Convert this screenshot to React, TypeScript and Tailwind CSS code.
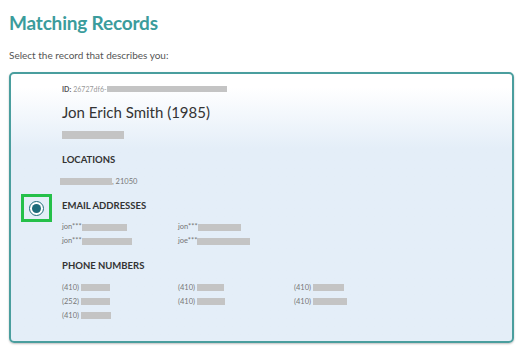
import React from 'react';

const Bar = ({ w, h = 'h-[8px]' }: { w: string; h?: string }) => (
  <span className={`inline-block ${w} ${h} bg-[#c4c4c4] align-middle`} />
);

const Heading = ({ children }: { children: React.ReactNode }) => (
  <h3 className="text-[9.5px] font-bold text-[#333] leading-none">{children}</h3>
);

const emails = [
  { prefix: 'jon***', w: 'w-[45px]' },
  { prefix: 'jon***', w: 'w-[43px]' },
  { prefix: 'jon***', w: 'w-[50px]' },
  { prefix: 'joe***', w: 'w-[53px]' },
];

const phones = [
  { area: '(410)', w: 'w-[29px]' },
  { area: '(410)', w: 'w-[27px]' },
  { area: '(410)', w: 'w-[31px]' },
  { area: '(252)', w: 'w-[29px]' },
  { area: '(410)', w: 'w-[28px]' },
  { area: '(410)', w: 'w-[34px]' },
  { area: '(410)', w: 'w-[30px]' },
];

export default function App() {
  return (
    <div className="w-[523px] h-[353px] bg-white pl-[9px] pr-[9px] pt-[10px] font-['Lato','Noto_Sans',sans-serif] overflow-hidden">
      <h1 className="text-[19px] font-bold text-[#3b9c9c] leading-[26px] tracking-[-0.01em]">Matching Records</h1>
      <p className="mt-[12px] text-[10px] text-[#555] leading-[14px]">Select the record that describes you:</p>

      <div className="mt-[10px] h-[271px] rounded-[5px] border-2 border-[#4a9e9e] bg-gradient-to-b from-white from-[5%] to-[#e4eef8] to-[28%] shadow-[0_1px_2px_rgba(0,0,0,0.25)] flex">
        {/* radio column */}
        <div className="w-[51px] shrink-0 flex flex-col">
          <div className="mt-[120px] ml-[10px] w-[31px] h-[28px] border-[3px] border-[#25c04a] flex items-center justify-center">
            <span className="w-[15px] h-[15px] rounded-full border-[1.5px] border-[#1e6b7a] bg-white flex items-center justify-center">
              <span className="w-[9px] h-[9px] rounded-full bg-[#1e6b7a]" />
            </span>
          </div>
        </div>

        <div className="flex-1 pt-[10px] text-[#777]">
          <div className="flex items-center text-[7px] leading-[10px]">
            <span className="font-bold text-[#555]">ID:</span>
            <span className="ml-[2px] text-[#999]">26727df6-</span>
            <Bar w="w-[120px]" h="h-[6px]" />
          </div>
          <div className="mt-[8px] text-[15px] text-[#333] leading-[20px]">Jon Erich Smith (1985)</div>
          <div className="mt-[3px] leading-none">
            <Bar w="w-[62px]" />
          </div>

          <div className="mt-[14px]">
            <Heading>LOCATIONS</Heading>
            <div className="mt-[12px] flex items-center text-[7.5px] leading-[10px] ml-[-2px]">
              <Bar w="w-[52px]" h="h-[7px]" />
              <span>, 21050</span>
            </div>
          </div>

          <div className="mt-[14px]">
            <Heading>EMAIL ADDRESSES</Heading>
            <div className="mt-[12px] grid grid-cols-[116px_116px] gap-y-[4px] text-[7.5px] leading-[10px]">
              {emails.map((e, i) => (
                <div key={i} className="flex items-center">
                  <span>{e.prefix}</span>
                  <Bar w={e.w} h="h-[7px]" />
                </div>
              ))}
            </div>
          </div>

          <div className="mt-[15px]">
            <Heading>PHONE NUMBERS</Heading>
            <div className="mt-[12px] grid grid-cols-[116px_116px_116px] gap-y-[4px] text-[7.5px] leading-[10px]">
              {phones.map((p, i) => (
                <div key={i} className="flex items-center gap-[2px]">
                  <span>{p.area}</span>
                  <Bar w={p.w} h="h-[7px]" />
                </div>
              ))}
            </div>
          </div>
        </div>
      </div>
    </div>
  );
}
